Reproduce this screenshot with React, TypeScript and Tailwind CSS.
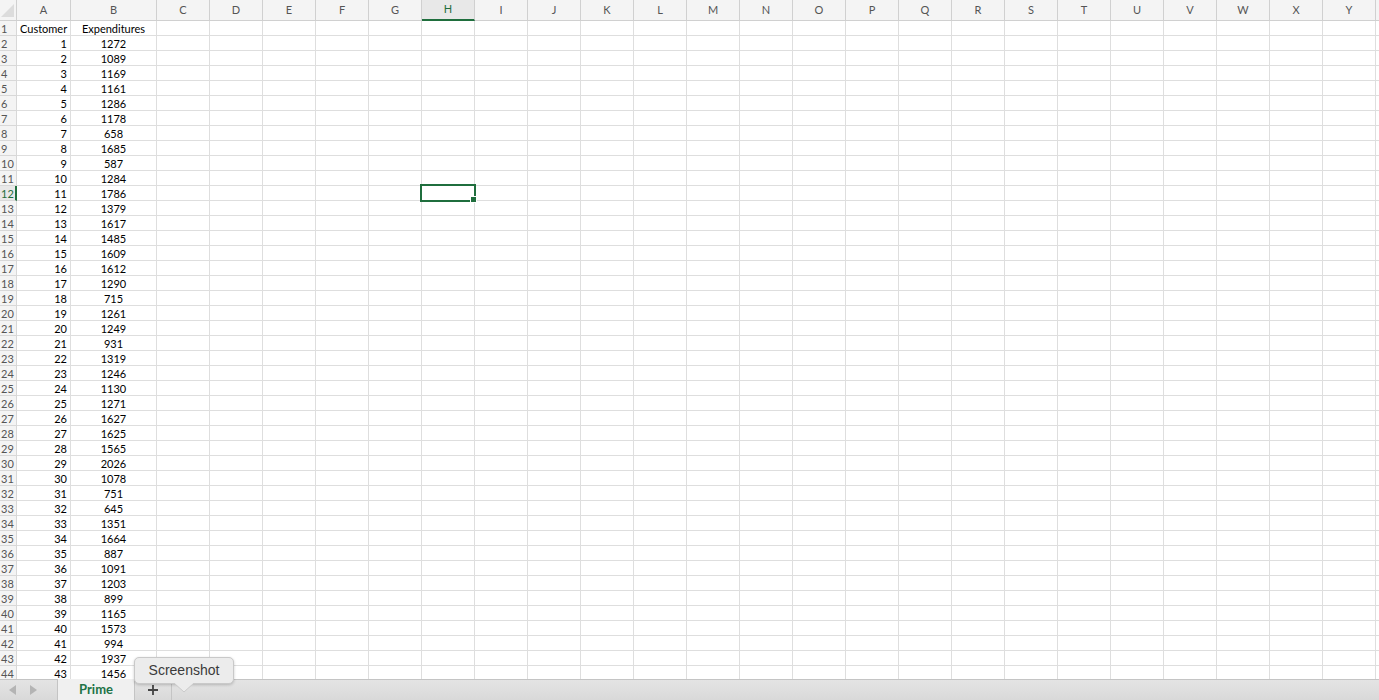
import React from "react";

const data = [1272,1089,1169,1161,1286,1178,658,1685,587,1284,1786,1379,1617,1485,1609,1612,1290,715,1261,1249,931,1319,1246,1130,1271,1627,1625,1565,2026,1078,751,645,1351,1664,887,1091,1203,899,1165,1573,994,1937,1456];

const otherCols = "CDEFGHIJKLMNOPQRSTUVWXY".split("");

const font = { fontFamily: "Lato, 'Liberation Sans', sans-serif" };

export default function App() {
  const rows = Array.from({ length: 44 }, (_, i) => i + 1);
  return (
    <div className="w-[1379px] h-[700px] flex flex-col overflow-hidden bg-white relative" style={font}>
      <div className="flex-1 overflow-hidden">
        {/* header row */}
        <div className="flex h-[21px] bg-[#f4f4f4]">
          <div className="w-[17px] shrink-0 border-r border-b border-[#d0d0d0] relative overflow-hidden">
            <svg width="17" height="21" className="absolute left-0 top-0">
              <polygon points="14,4 14,17 1,17" fill="#dcdcdc" />
            </svg>
          </div>
          <div className="w-[54px] shrink-0 border-r border-b border-[#d0d0d0] flex items-center justify-center text-[11px] text-[#555]">A</div>
          <div className="w-[86px] shrink-0 border-r border-b border-[#d0d0d0] flex items-center justify-center text-[11px] text-[#555]">B</div>
          {otherCols.map((c) => (
            <div
              key={c}
              className={
                c === "H"
                  ? "w-[53px] shrink-0 border-r border-[#d0d0d0] border-b-2 border-b-[#1f6e3d] flex items-center justify-center text-[11px] text-[#1f6e3d] bg-[#e8e8e8]"
                  : "w-[53px] shrink-0 border-r border-b border-[#d0d0d0] flex items-center justify-center text-[11px] text-[#555]"
              }
            >
              {c}
            </div>
          ))}
          <div className="w-[53px] shrink-0 border-r border-b border-[#d0d0d0]" />
        </div>
        {rows.map((r) => {
          const sel = r === 12;
          return (
            <div key={r} className="flex h-[15px]">
              <div
                className={
                  sel
                    ? "w-[17px] shrink-0 border-r-2 border-r-[#1f6e3d] border-b border-[#d8d8d8] bg-[#e8e8e8] text-[11px] leading-[14px] pt-[1px] pl-[1px] text-[#1f6e3d]"
                    : "w-[17px] shrink-0 border-r border-b border-[#d8d8d8] bg-[#f4f4f4] text-[11px] leading-[14px] pt-[1px] pl-[1px] text-[#555]"
                }
              >
                {r}
              </div>
              <div className="w-[54px] shrink-0 border-r border-b border-[#dedede] text-[11px] leading-[14px] pt-[1px] text-black text-right pr-[3px]">
                {r === 1 ? <span className="block text-left pl-[3px]">Customer</span> : r - 1}
              </div>
              <div className="w-[86px] shrink-0 border-r border-b border-[#dedede] text-[11px] leading-[14px] pt-[1px] text-black text-center">
                {r === 1 ? "Expenditures" : data[r - 2]}
              </div>
              {otherCols.map((c) => (
                <div key={c} className="w-[53px] shrink-0 border-r border-b border-[#dedede] relative">
                  {sel && c === "H" && (
                    <div className="absolute -left-[2px] -top-[2px] w-[56px] h-[18px] border-2 border-[#1f6e3d] z-10">
                      <div className="absolute -right-[3px] -bottom-[3px] w-[5px] h-[5px] bg-[#1f6e3d] border border-white box-content" />
                    </div>
                  )}
                </div>
              ))}
              <div className="w-[53px] shrink-0 border-r border-b border-[#dedede]" />
            </div>
          );
        })}
      </div>
      {/* tab bar */}
      <div className="h-[21px] shrink-0 flex bg-gradient-to-b from-[#e4e4e4] to-[#d9d9d9] border-t border-[#c4c4c4]">
        <div className="w-[57px] flex items-center gap-[12px] pl-[9px]">
          <svg width="8" height="10" viewBox="0 0 8 10"><polygon points="7,0 7,10 0,5" fill="#b4b4b4" /></svg>
          <svg width="8" height="10" viewBox="0 0 8 10"><polygon points="1,0 1,10 8,5" fill="#b4b4b4" /></svg>
        </div>
        <div className="w-[78px] -mt-[1px] bg-[#f0f0f0] border-x border-[#c4c4c4] flex items-center justify-center text-[13px] font-bold text-[#217346]">
          Prime
        </div>
        <div className="w-[37px] border-r border-[#c4c4c4] flex items-center justify-center">
          <svg width="12" height="12" viewBox="0 0 12 12"><path d="M6 1v10M1 6h10" stroke="#444" strokeWidth="1.8" /></svg>
        </div>
      </div>
      {/* tooltip */}
      <div className="absolute left-[134px] top-[657px] z-20">
        <div className="relative w-[100px] h-[27px] rounded-[5px] bg-[#ececec] border border-[#c9c9c9] shadow-[0_1px_3px_rgba(0,0,0,0.2)] flex items-center justify-center text-[14px] text-[#3a3a3a]" style={{ fontFamily: "'Liberation Sans', Arial, sans-serif" }}>
          Screenshot
          <svg width="20" height="10" viewBox="0 0 20 10" className="absolute left-[39px] -bottom-[10px]">
            <polygon points="0,0 20,0 10,9" fill="#ececec" />
            <polyline points="0,0 10,9 20,0" fill="none" stroke="#c9c9c9" strokeWidth="1" />
          </svg>
        </div>
      </div>
    </div>
  );
}
